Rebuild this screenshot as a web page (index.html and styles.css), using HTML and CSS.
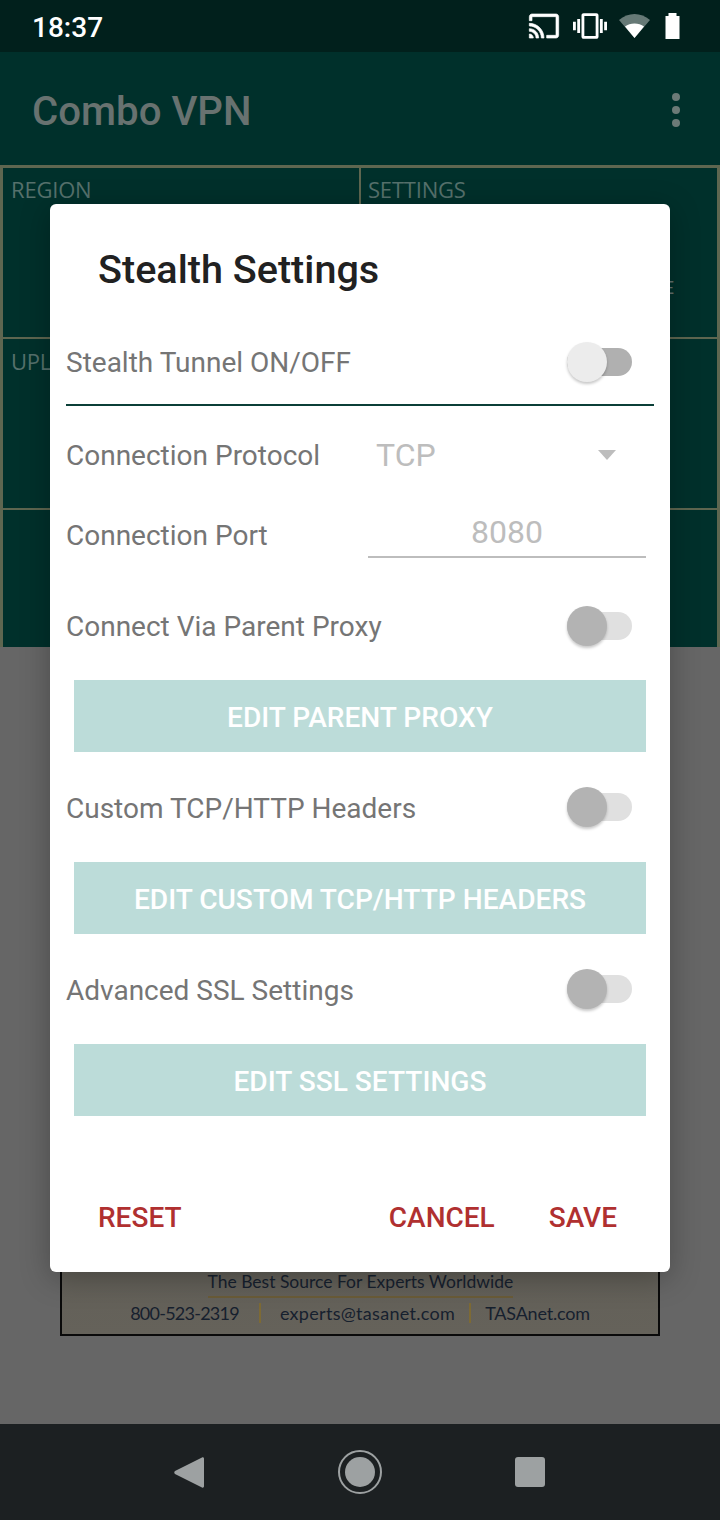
FILE: index.html
```html
<!DOCTYPE html>
<html lang="en">
<head>
<meta charset="utf-8">
<title>Combo VPN</title>
<link rel="stylesheet" href="styles.css">
</head>
<body>
<div class="page">
  <header class="status">
    <span class="time">18:37</span>
    <div class="status-icons">
      <svg class="ic-cast" viewBox="0 0 24 24"><path d="M21 3H3c-1.1 0-2 .9-2 2v3h2V5h18v14h-7v2h7c1.100 0 2-.9 2-2V5c0-1.100-.9-2-2-2zM1 18v3h3c0-1.660-1.340-3-3-3zm0-4v2c2.760 0 5 2.240 5 5h2c0-3.870-3.130-7-7-7zm0-4v2c4.970 0 9 4.030 9 9h2c0-6.080-4.930-11-11-11z"/></svg>
      <svg class="ic-vib" viewBox="0 0 24 24"><path d="M0 15h2V9H0v6zm3 2h2V7H3v10zm19-8v6h2V9h-2zm-3 8h2V7h-2v10zM16.500 3h-9C6.670 3 6 3.670 6 4.500v15c0 .83.670 1.500 1.500 1.500h9c.83 0 1.500-.670 1.500-1.500v-15c0-.83-.670-1.500-1.500-1.500zM16 19H8V5h8v14z"/></svg>
      <svg class="ic-wifi" viewBox="0 0 31 24"><path class="dim" d="M15.500 24 0 6C9-2 22-2 31 6Z"/><path d="M15.500 24 6 12.500C11 8.500 20 8.500 25 12.500Z"/></svg>
      <svg class="ic-batt" viewBox="0 0 14 26"><path d="M3 0h8v3h3v23H0V3h3z"/></svg>
    </div>
  </header>

  <div class="appbar">
    <span class="app-title">Combo VPN</span>
    <div class="overflow"><i></i><i></i><i></i></div>
  </div>

  <section class="grid">
    <div class="cell"><span class="cell-label">REGION</span></div>
    <div class="cell cell-right"><span class="cell-label">SETTINGS</span><span class="cell-value">E</span></div>
    <div class="cell"><span class="cell-label">UPLOAD</span></div>
    <div class="cell cell-right"><span class="cell-label">DOWNLOAD</span></div>
    <div class="cell"></div>
    <div class="cell cell-right"></div>
  </section>

  <main class="below">
    <div class="ad">
      <p class="ad-tag">The Best Source For Experts Worldwide</p>
      <p class="ad-contact">
        <span class="ad-phone">800-523-2319</span><b class="ad-sep ad-sep-a"></b><span class="ad-mail">experts@tasanet.com</span><b class="ad-sep ad-sep-b"></b><span class="ad-site">TASAnet.com</span>
      </p>
    </div>
  </main>

  <nav class="navbar">
    <svg class="nav-back" viewBox="0 0 30 33"><path d="M28 1.500c1-.6 2 0 2 1.200v27.600c0 1.200-1 1.800-2 1.200L1 18c-1-.8-1-2.200 0-3z"/></svg>
    <div class="nav-home"><i></i></div>
    <div class="nav-recent"></div>
  </nav>

  <div class="dialog">
    <h1 class="dlg-title">Stealth Settings</h1>

    <div class="row row-first">
      <span class="row-label">Stealth Tunnel ON/OFF</span>
      <div class="switch switch-light"><i></i></div>
    </div>
    <div class="rule"></div>

    <div class="row row-proto">
      <span class="row-label">Connection Protocol</span>
      <div class="spinner"><span>TCP</span><b class="caret"></b></div>
    </div>
    <div class="row row-port">
      <span class="row-label">Connection Port</span>
      <div class="port">8080</div>
    </div>

    <div class="row row-toggle row-proxy">
      <span class="row-label">Connect Via Parent Proxy</span>
      <div class="switch"><i></i></div>
    </div>
    <div class="btn">EDIT PARENT PROXY</div>

    <div class="row row-toggle">
      <span class="row-label">Custom TCP/HTTP Headers</span>
      <div class="switch"><i></i></div>
    </div>
    <div class="btn">EDIT CUSTOM TCP/HTTP HEADERS</div>

    <div class="row row-toggle">
      <span class="row-label">Advanced SSL Settings</span>
      <div class="switch"><i></i></div>
    </div>
    <div class="btn">EDIT SSL SETTINGS</div>

    <div class="actions">
      <span class="action">RESET</span>
      <span class="action action-cancel">CANCEL</span>
      <span class="action">SAVE</span>
    </div>
  </div>
</div>
</body>
</html>
```

FILE: styles.css
```css
* { box-sizing: border-box; }
html, body { margin: 0; padding: 0; }
body { font-family: Roboto, "Liberation Sans", sans-serif; }

.page {
  position: relative;
  width: 720px;
  height: 1520px;
  display: flex;
  flex-direction: column;
  background: #666666;
  overflow: hidden;
}

/* Status bar */
.status {
  height: 52px;
  flex: none;
  background: #01201c;
  display: flex;
  align-items: center;
  justify-content: space-between;
  padding: 0 40px 0 33px;
}
.time { color: #fff; font-size: 28px; font-weight: 500; margin-left: -1px; margin-top: 3px; }
.status-icons { display: flex; align-items: center; }
.status-icons svg { display: block; fill: #fff; }
.ic-cast { width: 32px; height: 32px; stroke: #fff; stroke-width: .5; }
.ic-vib { width: 34px; height: 34px; margin-left: 13px; }
.ic-wifi { width: 31px; height: 24px; margin-left: 12px; }
.ic-batt { width: 15px; height: 26px; margin-left: 15px; }
.ic-wifi .dim { opacity: .4; }

/* App bar */
.appbar {
  height: 113px;
  flex: none;
  background: #00302b;
  display: flex;
  align-items: center;
  justify-content: space-between;
  padding: 0 40px 0 32px;
}
.app-title { color: #687270; font-size: 40.2px; font-weight: 500; margin-top: 5px; }
.overflow { display: flex; flex-direction: column; gap: 5px; margin-top: 3px; }
.overflow i { display: block; width: 8px; height: 8px; border-radius: 50%; background: #6c7a77; }

/* Background grid */
.grid {
  height: 482px;
  flex: none;
  display: grid;
  grid-template-columns: 359px 361px;
  grid-template-rows: 172px 171px 139px;
  background: #00302b;
}
.cell {
  position: relative;
  border-top: 2px solid #5e6650;
  border-left: 3px solid #5e6650;
  padding: 8px 0 0 8px;
}
.cell:nth-child(-n+2) { border-top-width: 3px; padding-top: 7px; }
.cell-right { border-left-width: 2px; border-right: 3px solid #5e6650; padding-left: 7px; }
.cell-label {
  color: #56706c;
  font-family: "Open Sans", Lato, sans-serif;
  font-size: 22px;
  line-height: 28px;
  display: block;
  letter-spacing: -.2px;
}
.cell-value {
  position: absolute;
  top: 108px;
  right: 43px;
  color: #64726f;
  font-size: 18px;
  line-height: 24px;
}

/* Content below grid */
.below {
  flex: 1;
  display: flex;
  flex-direction: column;
  justify-content: flex-end;
  padding: 0 60px 88px;
}
.ad {
  height: 240px;
  border: 2px solid #0a0a0a;
  border-top: 0;
  background: linear-gradient(180deg, #5c5a55, #65625a);
  display: flex;
  flex-direction: column;
  justify-content: flex-end;
  align-items: center;
  padding-bottom: 9px;
  font-family: Lato, "Open Sans", sans-serif;
  color: #16202e;
}
.ad p { margin: 0; }
.ad-tag {
  font-size: 17.5px;
  line-height: 23px;
  width: 305px;
  text-align: center;
  border-bottom: 2px solid #6a5c38;
  padding-bottom: 3px;
  white-space: nowrap;
}
.ad-contact {
  display: flex;
  align-items: center;
  font-size: 18px;
  line-height: 24px;
  margin-top: 3px !important;
  white-space: nowrap;
}
.ad-phone { letter-spacing: -.75px; }
.ad-mail { letter-spacing: .3px; }
.ad-site { letter-spacing: -.2px; }
.ad-sep { display: block; width: 2px; height: 20px; background: #7d6a35; }
.ad-sep-a { margin: 0 19px 0 20px; }
.ad-sep-b { margin: 0 14px; }

/* Navigation bar */
.navbar {
  height: 96px;
  flex: none;
  background: #1c2022;
  position: relative;
  display: grid;
  grid-template-columns: 174px 30px 134px 44px 133px 30px;
  align-items: center;
}
.nav-back { grid-column: 2; display: block; width: 30px; height: 33px; fill: #9da1a2; }
.nav-home {
  grid-column: 4;
  width: 44px;
  height: 44px;
  border: 2px solid #9da1a2;
  border-radius: 50%;
  display: flex;
  align-items: center;
  justify-content: center;
}
.nav-home i { display: block; width: 30px; height: 30px; border-radius: 50%; background: #9da1a2; }
.nav-recent { grid-column: 6; width: 30px; height: 30px; border-radius: 3px; background: #9da1a2; }

/* Dialog */
.dialog {
  position: absolute;
  left: 50px;
  top: 204px;
  width: 620px;
  height: 1068px;
  background: #fff;
  border-radius: 6px;
  padding: 0 16px;
  box-shadow: 0 6px 30px rgba(0, 0, 0, .28);
}
.dlg-title {
  margin: 0;
  height: 112px;
  padding: 42px 0 0 32px;
  font-size: 39.6px;
  line-height: 48px;
  font-weight: 500;
  color: #212121;
}
.row { display: flex; align-items: center; justify-content: space-between; }
.row-label { color: #757575; font-size: 28px; white-space: nowrap; }
.row-first { height: 88px; padding-top: 4px; }
.row-first .switch { margin-top: -1px; }
.rule { height: 2px; background: #0b3f38; }
.row-proto { height: 80px; margin-top: 9px; justify-content: flex-start; }
.row-port { height: 80px; justify-content: flex-start; }
.row-toggle { height: 72px; }
.row-proxy { margin-top: 15px; }
.btn + .row .switch { margin-top: -2px; }
.row-proto .row-label, .row-port .row-label { width: 302px; flex: none; }

.spinner {
  flex: 1;
  display: flex;
  align-items: center;
  justify-content: space-between;
  padding: 0 38px 0 8px;
  color: #bdbdbd;
  font-size: 32px;
}
.caret {
  display: block;
  width: 0;
  height: 0;
  border-left: 9px solid transparent;
  border-right: 9px solid transparent;
  border-top: 10px solid #bdbdbd;
}
.port {
  width: 278px;
  flex: none;
  height: 46px;
  padding-top: 1px;
  border-bottom: 2px solid #bdbdbd;
  color: #bdbdbd;
  font-size: 32px;
  line-height: 38px;
  text-align: center;
}

.switch {
  position: relative;
  width: 65px;
  height: 28px;
  margin-right: 22px;
  border-radius: 14px;
  background: #e0e0e0;
}
.switch i {
  position: absolute;
  left: 0;
  top: -6px;
  width: 40px;
  height: 40px;
  border-radius: 50%;
  background: #b3b3b3;
  box-shadow: 0 2px 3px rgba(0, 0, 0, .22);
}
.switch-light { background: #b0b0b0; }
.switch-light i { background: #ececec; }

.btn {
  height: 72px;
  margin: 18px 8px 20px;
  padding-top: 2px;
  background: #bcdcd9;
  color: #fff;
  font-size: 28.1px;
  font-weight: 500;
  display: flex;
  align-items: center;
  justify-content: center;
}

.actions {
  position: absolute;
  left: 48px;
  right: 53px;
  top: 984px;
  display: flex;
  color: #b03030;
  font-size: 28px;
  font-weight: 500;
  line-height: 60px;
}
.action-cancel { margin-left: auto; margin-right: 54px; }
```
